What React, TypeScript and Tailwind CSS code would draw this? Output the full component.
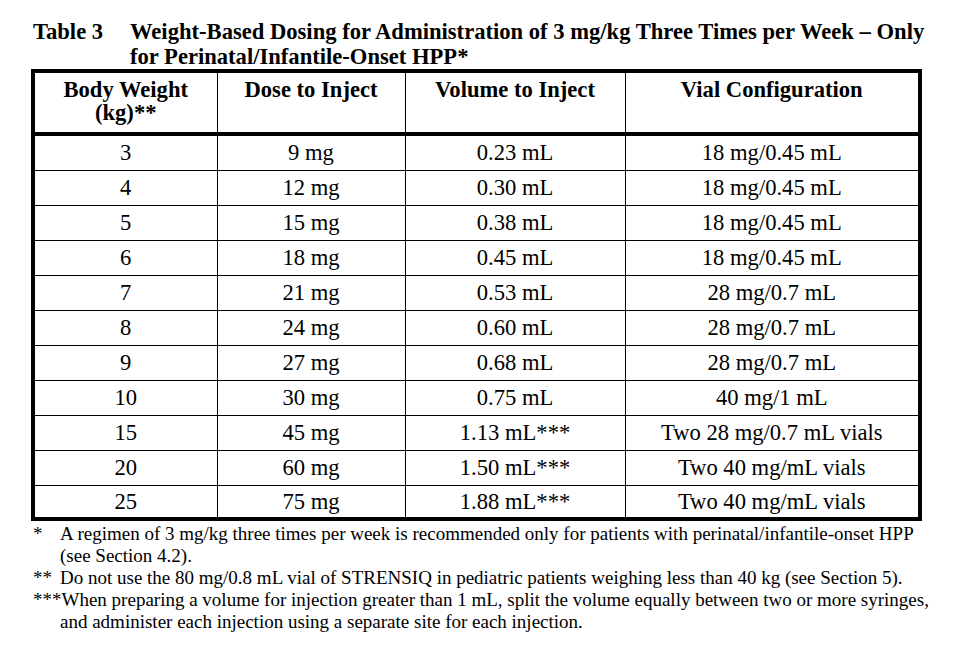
const rows: [string, string, string, string][] = [
  ['3', '9 mg', '0.23 mL', '18 mg/0.45 mL'],
  ['4', '12 mg', '0.30 mL', '18 mg/0.45 mL'],
  ['5', '15 mg', '0.38 mL', '18 mg/0.45 mL'],
  ['6', '18 mg', '0.45 mL', '18 mg/0.45 mL'],
  ['7', '21 mg', '0.53 mL', '28 mg/0.7 mL'],
  ['8', '24 mg', '0.60 mL', '28 mg/0.7 mL'],
  ['9', '27 mg', '0.68 mL', '28 mg/0.7 mL'],
  ['10', '30 mg', '0.75 mL', '40 mg/1 mL'],
  ['15', '45 mg', '1.13 mL***', 'Two 28 mg/0.7 mL vials'],
  ['20', '60 mg', '1.50 mL***', 'Two 40 mg/mL vials'],
  ['25', '75 mg', '1.88 mL***', 'Two 40 mg/mL vials'],
]

export default function App() {
  return (
    <div className="min-h-screen w-[953px] bg-white text-black font-['Liberation_Serif','Times_New_Roman',serif]">
      {/* Caption */}
      <div className="flex pl-[33px] pt-[19px] text-[22.6px] font-bold leading-[25px]">
        <div className="w-[97px] shrink-0">Table 3</div>
        <div className="whitespace-nowrap">
          Weight-Based Dosing for Administration of 3 mg/kg Three Times per Week – Only
          <br />
          for Perinatal/Infantile-Onset HPP*
        </div>
      </div>

      {/* Table */}
      <div className="ml-[31px] w-[891px] border-4 border-black">
        <table className="w-full table-fixed border-collapse text-[22.6px] leading-[25px]">
          <colgroup>
            <col className="w-[182px]" />
            <col className="w-[188px]" />
            <col className="w-[220px]" />
            <col className="w-[293px]" />
          </colgroup>
          <thead>
            <tr className="h-[61px] border-b-4 border-black">
              <th className="pt-[5px] align-top font-bold leading-[23px]">
                Body Weight
                <br />
                (kg)**
              </th>
              <th className="border-l border-black pt-[5px] align-top font-bold leading-[23px]">Dose to Inject</th>
              <th className="border-l border-black pt-[5px] align-top font-bold leading-[23px]">Volume to Inject</th>
              <th className="border-l border-black pt-[5px] align-top font-bold leading-[23px]">Vial Configuration</th>
            </tr>
          </thead>
          <tbody>
            {rows.map((r, i) => (
              <tr
                key={r[0]}
                className={
                  i === 0
                    ? 'h-[36px]'
                    : i === rows.length - 1
                      ? 'h-[32px] border-t border-black'
                      : 'h-[35px] border-t border-black'
                }
              >
                <td className="text-center">{r[0]}</td>
                <td className="border-l border-black text-center">{r[1]}</td>
                <td className="border-l border-black text-center">{r[2]}</td>
                <td className="border-l border-black text-center">{r[3]}</td>
              </tr>
            ))}
          </tbody>
        </table>
      </div>

      {/* Footnotes */}
      <div className="mt-[2px] ml-[33px] w-[905px] text-[19px] leading-[22px]">
        <div className="flex">
          <span className="w-[27px] shrink-0">*</span>
          <p>
            A regimen of 3 mg/kg three times per week is recommended only for patients with perinatal/infantile-onset HPP
            (see Section 4.2).
          </p>
        </div>
        <div className="flex">
          <span className="w-[27px] shrink-0">**</span>
          <p>Do not use the 80 mg/0.8 mL vial of STRENSIQ in pediatric patients weighing less than 40 kg (see Section 5).</p>
        </div>
        <p className="pl-[27px] -indent-[27px]">
          ***When preparing a volume for injection greater than 1 mL, split the volume equally between two or more syringes,
          and administer each injection using a separate site for each injection.
        </p>
      </div>
    </div>
  )
}
